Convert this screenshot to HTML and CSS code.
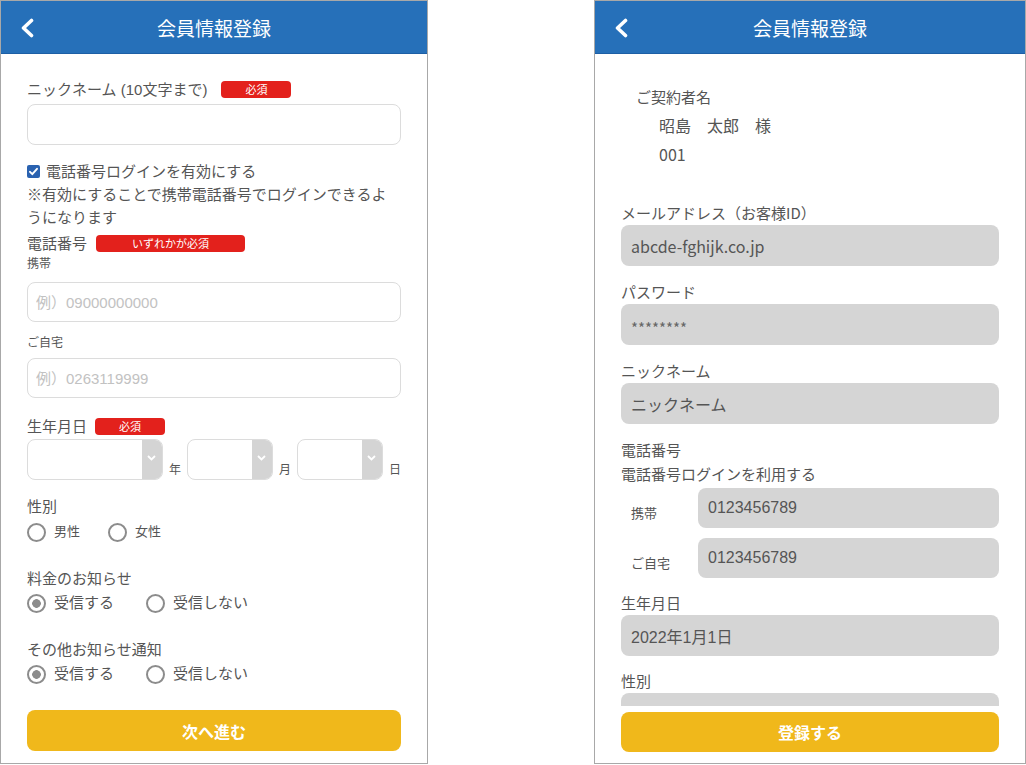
FILE: index.html
```html
<!DOCTYPE html>
<html lang="ja">
<head>
    <meta charset="UTF-8">
    <meta name="viewport" content="width=device-width, initial-scale=1.0">
    <title>会員情報登録</title>
    <link rel="stylesheet" href="styles.css">
</head>
<body>
    <div class="phone phone-left">
        <header class="topbar">
            <a class="back" href="#">
                <svg width="14" height="20" viewBox="0 0 14 20"><polyline points="11.5,2.5 3.5,10 11.5,17.5" fill="none" stroke="#fff" stroke-width="3.6" stroke-linecap="round" stroke-linejoin="round"/></svg>
            </a>
            <h1 class="title">会員情報登録</h1>
        </header>
        <form class="form">
            <div class="label">ニックネーム (10文字まで)<span class="badge badge-first">必須</span></div>
            <input class="input input-top" type="text">

            <label class="check-row">
                <svg width="13" height="13" viewBox="0 0 13 13"><rect width="13" height="13" rx="2" fill="#2a62b0"/><polyline points="3,6.8 5.3,9.2 10,3.8" fill="none" stroke="#fff" stroke-width="1.9" stroke-linecap="round" stroke-linejoin="round"/></svg>
                電話番号ログインを有効にする
            </label>
            <p class="note">※有効にすることで携帯電話番号でログインできるようになります</p>

            <div class="label label-phone">電話番号<span class="badge badge-wide">いずれかが必須</span></div>
            <div class="sub">携帯</div>
            <input class="input input-mobile" type="text" placeholder="例）09000000000">
            <div class="sub sub-home">ご自宅</div>
            <input class="input input-home" type="text" placeholder="例）0263119999">

            <div class="label label-birth">生年月日<span class="badge">必須</span></div>
            <div class="date-row">
                <div class="select select-year"><span class="select-arrow"><svg width="9" height="6" viewBox="0 0 9 6"><polyline points="1,1 4.5,4.5 8,1" fill="none" stroke="#fff" stroke-width="1.8"/></svg></span></div>
                <span class="unit">年</span>
                <div class="select select-small"><span class="select-arrow"><svg width="9" height="6" viewBox="0 0 9 6"><polyline points="1,1 4.5,4.5 8,1" fill="none" stroke="#fff" stroke-width="1.8"/></svg></span></div>
                <span class="unit">月</span>
                <div class="select select-small"><span class="select-arrow"><svg width="9" height="6" viewBox="0 0 9 6"><polyline points="1,1 4.5,4.5 8,1" fill="none" stroke="#fff" stroke-width="1.8"/></svg></span></div>
                <span class="unit">日</span>
            </div>

            <div class="label label-gap">性別</div>
            <div class="radios radios-small">
                <label class="radio"><input type="radio" name="sex">男性</label>
                <label class="radio"><input type="radio" name="sex">女性</label>
            </div>

            <div class="label label-section">料金のお知らせ</div>
            <div class="radios">
                <label class="radio"><input type="radio" name="fee" checked>受信する</label>
                <label class="radio"><input type="radio" name="fee">受信しない</label>
            </div>

            <div class="label label-section">その他お知らせ通知</div>
            <div class="radios">
                <label class="radio"><input type="radio" name="other" checked>受信する</label>
                <label class="radio"><input type="radio" name="other">受信しない</label>
            </div>

            <button type="button" class="next">次へ進む</button>
        </form>
    </div>

    <div class="phone phone-right">
        <header class="topbar">
            <a class="back" href="#">
                <svg width="14" height="20" viewBox="0 0 14 20"><polyline points="11.5,2.5 3.5,10 11.5,17.5" fill="none" stroke="#fff" stroke-width="3.6" stroke-linecap="round" stroke-linejoin="round"/></svg>
            </a>
            <h1 class="title">会員情報登録</h1>
        </header>
        <div class="scroll">
            <div class="contract">
                <div class="contract-label">ご契約者名</div>
                <div class="contract-value">昭島　太郎　様</div>
                <div class="contract-value">001</div>
            </div>

            <div class="rlabel rlabel-first">メールアドレス（お客様ID）</div>
            <div class="field">abcde-fghijk.co.jp</div>

            <div class="rlabel">パスワード</div>
            <div class="field field-pw">********</div>

            <div class="rlabel">ニックネーム</div>
            <div class="field">ニックネーム</div>

            <div class="rlabel">電話番号</div>
            <div class="rlabel rlabel-tight">電話番号ログインを利用する</div>
            <div class="phone-row">
                <span class="row-label">携帯</span>
                <div class="field field-num">0123456789</div>
            </div>
            <div class="phone-row">
                <span class="row-label">ご自宅</span>
                <div class="field field-num">0123456789</div>
            </div>

            <div class="rlabel rlabel-mid">生年月日</div>
            <div class="field field-num">2022年1月1日</div>

            <div class="rlabel rlabel-mid">性別</div>
            <div class="field"></div>
        </div>
        <div class="footer">
            <button type="button" class="next submit">登録する</button>
        </div>
    </div>
</body>
</html>
```

FILE: styles.css
```css
* {
    box-sizing: border-box;
}
body {
    margin: 0;
    display: flex;
    justify-content: space-between;
    background: #fff;
    color: #555;
    font-family: "Liberation Sans", "Noto Sans CJK JP", sans-serif;
}
.phone {
    height: 764px;
    border: 1px solid #a8a8a8;
    display: flex;
    flex-direction: column;
    overflow: hidden;
    background: #fff;
}
.phone-left {
    width: 428px;
}
.phone-right {
    width: 432px;
    font-family: "Noto Sans CJK JP", sans-serif;
}
.topbar {
    position: relative;
    flex-shrink: 0;
    height: 53px;
    background: #2670b9;
    border-bottom: 1px solid #1d5fa5;
    display: flex;
    align-items: center;
    justify-content: center;
}
.title {
    margin: 0;
    font-family: "Noto Sans CJK JP", sans-serif;
    font-weight: 400;
    font-size: 19px;
    color: #fff;
}
.back {
    position: absolute;
    left: 19px;
    top: 17px;
    width: 14px;
    height: 20px;
    display: block;
}
.back svg {
    display: block;
}

/* left form */
.form {
    padding: 24px 26px 0;
}
.label {
    display: flex;
    align-items: center;
    font-size: 15px;
    line-height: 23px;
}
.badge {
    display: inline-block;
    width: 70px;
    height: 17px;
    margin-left: 8px;
    border-radius: 4px;
    background: #e3211c;
    color: #fff;
    font-family: "Noto Sans CJK JP", sans-serif;
    font-size: 11px;
    line-height: 17px;
    text-align: center;
}
.badge-first {
    margin-left: 14px;
}
.badge-wide {
    width: 149px;
    margin-left: 9px;
}
.input {
    display: block;
    width: 100%;
    height: 40px;
    border: 1px solid #dcdcdc;
    border-radius: 8px;
    padding: 0 8px;
    font-family: "Liberation Sans", "Noto Sans CJK JP", sans-serif;
    font-size: 15px;
    color: #555;
    outline: none;
}
.input::placeholder {
    color: #c2c2c2;
}
.input-top {
    height: 41px;
    margin-top: 3px;
}
.check-row {
    display: flex;
    align-items: center;
    gap: 6px;
    margin-top: 15px;
    font-size: 15px;
    line-height: 23px;
}
.check-row svg {
    flex-shrink: 0;
}
.note {
    margin: 0;
    font-size: 15px;
    line-height: 23px;
}
.label-phone {
    margin-top: 3px;
}
.sub {
    font-size: 12px;
    line-height: 18px;
}
.input-mobile {
    margin-top: 9px;
}
.sub-home {
    margin-top: 12px;
}
.input-home {
    margin-top: 6px;
}
.label-birth {
    margin-top: 17px;
}
.date-row {
    display: flex;
    align-items: flex-end;
    gap: 6px;
    margin-top: 1px;
}
.select {
    height: 41px;
    border: 1px solid #dcdcdc;
    border-radius: 8px;
    display: flex;
    justify-content: flex-end;
    overflow: hidden;
}
.select-year {
    flex: 1;
}
.select-small {
    width: 86px;
}
.select-arrow {
    width: 20px;
    background: #d4d4d4;
    display: flex;
    align-items: center;
    justify-content: center;
    padding-bottom: 3px;
}
.unit {
    font-size: 12px;
    line-height: 16px;
    padding-bottom: 2px;
}
.label-gap {
    margin-top: 15px;
}
.label-section {
    margin-top: 24px;
}
.radios {
    display: flex;
    align-items: center;
    margin-top: 2px;
    line-height: 22px;
}
.radio {
    display: flex;
    align-items: center;
    gap: 8px;
    margin-right: 32px;
    font-size: 15px;
}
.radio input {
    appearance: none;
    margin: 0;
    width: 19px;
    height: 19px;
    border: 2px solid #8c8c8c;
    border-radius: 50%;
    background: #fff;
}
.radio input:checked {
    background: radial-gradient(circle, #8c8c8c 0 4px, #fff 4.6px);
}
.radios-small {
    margin-top: 3px;
}
.radios-small .radio {
    font-size: 13px;
    margin-right: 28px;
}
.next {
    display: block;
    width: 100%;
    height: 41px;
    margin-top: 25px;
    border: none;
    border-radius: 8px;
    background: #f0b81b;
    color: #fff;
    font-family: "Noto Sans CJK JP", sans-serif;
    font-weight: bold;
    font-size: 16px;
}

/* right confirm */
.scroll {
    flex: 1;
    overflow: hidden;
    padding: 28px 26px 0;
}
.contract {
    font-size: 15px;
    line-height: 29px;
}
.contract-label {
    padding-left: 15px;
}
.contract-value {
    padding-left: 38px;
    font-size: 16px;
}
.rlabel {
    margin-top: 14px;
    font-size: 15px;
    line-height: 24px;
}
.rlabel-first {
    margin-top: 32px;
}
.rlabel-tight {
    margin-top: 0;
}
.rlabel-mid {
    margin-top: 13px;
}
.field {
    height: 41px;
    border-radius: 8px;
    background: #d5d5d5;
    padding: 0 10px;
    display: flex;
    align-items: center;
    font-size: 16px;
    color: #555;
}
.field-pw {
    padding-top: 6px;
    font-size: 15px;
    color: #666;
}
.field-num {
    font-family: "Liberation Sans", "Noto Sans CJK JP", sans-serif;
}
.phone-row {
    display: flex;
    align-items: center;
    margin-top: 2px;
}
.phone-row + .phone-row {
    margin-top: 10px;
}
.row-label {
    width: 77px;
    padding-left: 10px;
    padding-top: 8px;
    font-size: 13px;
}
.phone-row .field {
    flex: 1;
    height: 40px;
}
.footer {
    flex-shrink: 0;
    height: 57px;
    padding: 6px 26px 0;
}
.submit {
    height: 40px;
    margin-top: 0;
}
```
